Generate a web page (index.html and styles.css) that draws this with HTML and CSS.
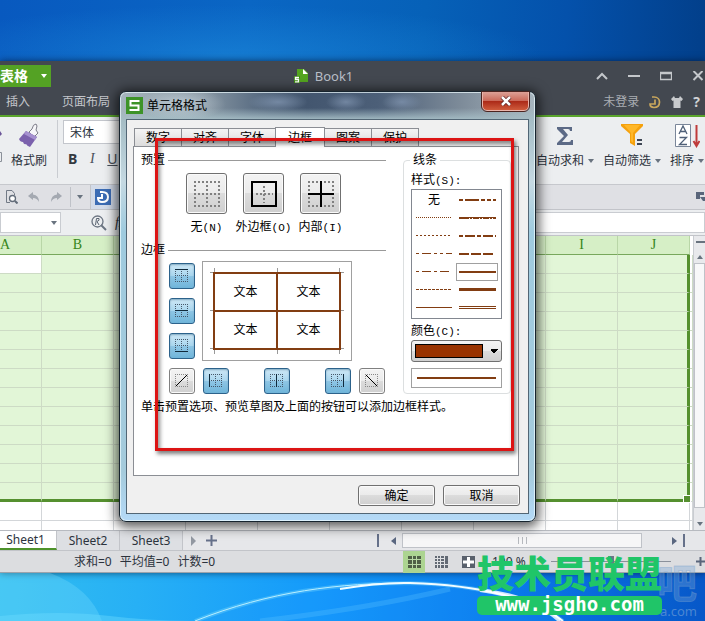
FILE: index.html
```html
<!DOCTYPE html>
<html lang="zh-CN">
<head>
<meta charset="utf-8">
<title>Book1</title>
<link rel="stylesheet" href="styles.css">
</head>
<body>
<svg class="defs" aria-hidden="true">
  <symbol id="dots" viewBox="0 0 14 14"><path d="M0 .5H14M0 6.500H14M0 12.500H14M.5 0V14M6.500 0V14M12.500 0V14" fill="none" stroke="#46586a" stroke-dasharray="1 1"/></symbol>
  <symbol id="bigdots" viewBox="0 0 26 26"><path d="M0 1H26M0 13H26M0 25H26M1 0V26M13 0V26M25 0V26" fill="none" stroke="#808080" stroke-width="2" stroke-dasharray="2 2"/></symbol>
  <symbol id="caret" viewBox="0 0 6 4"><path d="M0 0H6L3 4Z" fill="currentColor"/></symbol>
</svg>
<div class="desktop">
  <main class="app">
    <header class="titlebar">
      <button class="brand">表格<svg class="caret"><use href="#caret"/></svg></button>
      <div class="doc">
        <svg width="15" height="15" viewBox="0 0 15 15"><path d="M3 0H10L14 4V13H3Z" fill="#54a51f"/><path d="M9 0V5H14Z" fill="#fff"/><path d="M0 7H6V14H0Z" fill="#3f8d12"/><path d="M5 8.500H1.500V10.500H4.500V12.800H1" fill="none" stroke="#fff" stroke-width="1.300"/></svg>
        <span>Book1</span>
      </div>
      <div class="winbtns">
        <button aria-label="收起"><svg width="12" height="10" viewBox="0 0 12 10"><path d="M1 8L6 3L11 8" fill="none" stroke="#c4c7cb" stroke-width="2"/></svg></button>
        <button aria-label="最小化"><svg width="12" height="10" viewBox="0 0 12 10"><path d="M0 5H12" stroke="#c4c7cb" stroke-width="2"/></svg></button>
        <button aria-label="最大化"><svg width="12" height="10" viewBox="0 0 12 10"><path d="M.5 1.500H11.500V8.500H.5ZM0 2.500H12" fill="none" stroke="#c4c7cb" stroke-width="1.300"/></svg></button>
        <button aria-label="关闭窗口"><svg width="12" height="10" viewBox="0 0 12 10"><path d="M1.500 0L10.500 9M10.500 0L1.500 9" stroke="#c4c7cb" stroke-width="2"/></svg></button>
      </div>
    </header>
    <nav class="menubar">
      <a href="#">插入</a><a href="#">页面布局</a>
      <div class="account">
        <a href="#">未登录</a>
        <svg width="12" height="13" viewBox="0 0 12 13"><path d="M3 1H5C9 1 10.500 4 10.500 6C10.500 10 8 11.500 5 11.500C2.500 11.500 1 10 1 8H6V3.500" fill="none" stroke="#c9a75c" stroke-width="1.700"/></svg>
        <svg width="12" height="12" viewBox="0 0 12 12"><path d="M3 0L4 2H8L9 0L12 3L10.500 5L9.500 4.500V12H2.500V4.500L1.500 5L0 3Z" fill="#c8cacd"/></svg>
        <a href="#" class="help">?</a>
      </div>
    </nav>
    <section class="ribbon">
      <div class="clip"><svg width="2" height="40" viewBox="0 0 2 40"><path d="M0 4L2 7L0 9Z" fill="#6b5598"/><path d="M0 25.500H1.500V34.500H0" fill="none" stroke="#8a9099"/></svg></div>
      <button class="tool brush">
        <svg width="22" height="25" viewBox="0 0 22 25"><path d="M11 9L14 6Q15 1 18 1Q20 2 18 7L20 10L16 14Z" fill="#f6f6f9" stroke="#7c7c88"/><path d="M8 8L19 14L12 24Q9 23 8 21Q6 22 5 19Q2 19 1 16Z" fill="#7b61ad"/><path d="M8 8L19 14L17 17L6 11Z" fill="#a590cf"/></svg>
        格式刷
      </button>
      <div class="fontgroup">
        <input class="fontname" aria-label="字体名称" value="宋体">
        <div class="styles"><button class="b">B</button><button class="i">I</button><button class="u">U</button></div>
      </div>
      <div class="tools">
        <button class="tool"><svg width="18" height="25" viewBox="0 0 18 25"><path d="M1 4H16V8H14Q14 6 12 6H7L12 12L6 19H13Q15 19 15 17H17V22H1V20L8 13L1 6Z" fill="#5c6a86"/></svg><span>自动求和 <svg class="caret"><use href="#caret"/></svg></span></button>
        <button class="tool"><svg width="22" height="25" viewBox="0 0 22 25"><path d="M0 1H22V3L14 11V23L9 20V11L0 3Z" fill="#f5a10d"/><path d="M3 2H19L12 10V20L10 18V10Z" fill="#ffb728"/><path d="M16 17H21M16 21H21" stroke="#3e4654" stroke-width="2"/></svg><span>自动筛选 <svg class="caret"><use href="#caret"/></svg></span></button>
        <button class="tool"><svg width="26" height="25" viewBox="0 0 26 25"><path d="M1.500 1.500H16.500V23.500H1.500Z" fill="#fff" stroke="#7a8699"/><path d="M5 11L9 3L13 11M6.500 8.500H11.500M5.500 14.500H12.500L5.500 21.500H13" fill="none" stroke="#4f6078" stroke-width="1.300"/><path d="M22.500 2V22M19.500 18L22.500 23L25.500 18" fill="none" stroke="#bf3b3b" stroke-width="2"/></svg><span>排序 <svg class="caret"><use href="#caret"/></svg></span></button>
      </div>
    </section>
    <section class="quick">
      <button aria-label="打印预览"><svg width="13" height="14" viewBox="0 0 13 14"><path d="M9.500 5V3.500L7 .5H1.500V12.500H5" fill="none" stroke="#727a86"/><circle cx="7.500" cy="8.500" r="3" fill="#fff" stroke="#626c79" stroke-width="1.300"/><path d="M10 11L12.500 13.500" stroke="#626c79" stroke-width="2"/></svg></button>
      <button aria-label="撤销"><svg width="12" height="10" viewBox="0 0 12 10"><path d="M0 4L5 0V2.500Q11 3 11 10Q9 6 5 6V8Z" fill="#a4a9b1"/></svg></button>
      <button aria-label="恢复"><svg width="12" height="10" viewBox="0 0 12 10"><path d="M12 4L7 0V2.500Q1 3 1 10Q3 6 7 6V8Z" fill="#a4a9b1"/></svg></button>
      <button class="more" aria-label="更多"><svg class="caret"><use href="#caret"/></svg></button>
      <div class="doctab"><svg width="16" height="16" viewBox="0 0 16 16"><path d="M0 0H16V16H0Z" fill="#3c6cb4"/><path d="M5 3H7Q13 3 13 8Q13 13 7 13Q3 13 3 9H7V5" fill="none" stroke="#fff" stroke-width="2"/></svg>
      <svg width="12" height="12" viewBox="0 0 12 12"><path d="M2.500 1.500H11.500V10.500H2.500ZM4 4H10M4 7H10" fill="none" stroke="#6b7585"/></svg></div>
      <svg class="corner" width="9" height="10" viewBox="0 0 9 10"><path d="M0 0H8V3H4V7H0Z" fill="#59657a"/><path d="M4 5H9V9H7Z" fill="#59657a"/></svg>
    </section>
    <section class="formula">
      <div class="namebox"><svg class="caret"><use href="#caret"/></svg></div>
      <svg width="16" height="16" viewBox="0 0 16 16"><circle cx="6.500" cy="6.500" r="5.500" fill="none" stroke="#6c7582" stroke-width="1.300"/><path d="M10 10L15 15" stroke="#6c7582" stroke-width="2"/><path d="M4.500 10L5.500 3.500H8Q9 5.500 6 6.500L8 10" fill="none" stroke="#596371"/></svg>
      <i class="fx">fx</i>
      <input class="fbar" aria-label="编辑栏">
    </section>
    <section class="sheet">
      <table class="cells">
        <colgroup><col class="first"><col class="c"><col class="c"><col class="c"><col class="c"><col class="c"><col class="c"><col class="c"><col class="c"><col class="c"><col></colgroup>
        <thead><tr><th class="a">A</th><th>B</th><th>C</th><th>D</th><th>E</th><th>F</th><th>G</th><th>H</th><th>I</th><th>J</th><th class="end"></th></tr></thead>
        <tbody id="rows"></tbody>
      </table>
      <div class="vscroll">
        <span class="split"></span>
        <svg class="caret up"><use href="#caret"/></svg>
        <span class="vthumb"></span>
        <svg class="caret"><use href="#caret"/></svg>
      </div>
    </section>
    <section class="sheetbar">
      <button class="on">Sheet1</button><button>Sheet2</button><button>Sheet3</button>
      <svg class="next" width="6" height="10" viewBox="0 0 6 10"><path d="M0 0L5 5L0 10Z" fill="#9298a1"/></svg>
      <svg width="11" height="11" viewBox="0 0 11 11"><path d="M0 5.500H11M5.500 0V11" stroke="#66718a" stroke-width="2"/></svg>
      <div class="hscroll">
        <span class="bar"></span>
        <svg width="5" height="8" viewBox="0 0 5 8"><path d="M5 0V8L0 4Z" fill="#5a6780"/></svg>
        <span class="hthumb"><i></i><i></i><i></i></span>
        <svg class="right" width="5" height="8" viewBox="0 0 5 8"><path d="M0 0V8L5 4Z" fill="#5a6780"/></svg>
        <span class="bar"></span>
      </div>
    </section>
    <footer class="status">
      <span>求和=0</span><span>平均值=0</span><span>计数=0</span>
      <div class="view">
        <button class="on" aria-label="普通视图"><svg width="13" height="12" viewBox="0 0 13 12"><path d="M0 0H13V12H0Z" fill="#4f6045"/><path d="M0 3.500H13M0 8.500H13M4.500 0V12M8.500 0V12" stroke="#b9d9a5"/></svg></button>
        <button aria-label="分页视图"><svg width="13" height="12" viewBox="0 0 13 12"><path d="M0 0H13V12H0Z" fill="#626974"/><path d="M0 2.500H9M0 5.500H9M0 8.500H13M2.500 0V12M5.500 0V12M9.500 0V12" stroke="#dfe0e3"/></svg></button>
        <button aria-label="阅读视图"><svg width="13" height="12" viewBox="0 0 13 12"><path d="M0 0H13V12H0Z" fill="#59606c"/><path d="M1 6H12M6.500 1V11" stroke="#fff" stroke-width="3"/></svg></button>
        <span class="pct">100 %</span>
        <input class="zoom" type="range" aria-label="缩放">
        <svg width="9" height="9" viewBox="0 0 9 9"><path d="M0 4.500H9M4.500 0V9" stroke="#59657a" stroke-width="2"/></svg>
      </div>
    </footer>
  </main>
  <svg class="glow" viewBox="0 0 705 48" preserveAspectRatio="none" aria-hidden="true">
    <path d="M0 0H50Q90 15 102 48H0Z" fill="#8ce6ff" opacity=".25"/>
    <path d="M0 43Q60 37 110 43T230 48H0Z" fill="#6fdcff" opacity=".4"/>
    <path d="M195 48C270 18 340 8 430 12C500 18 545 30 565 48Z" fill="#1c93ff" opacity=".2"/>
    <path d="M195 48C270 18 340 10 410 10C480 12 535 26 563 48" fill="none" stroke="#8fe4ff" stroke-width="4" opacity=".3"/>
    <path d="M195 48C270 18 340 10 410 10" fill="none" stroke="#b8efff" stroke-width="1"/>
    <path d="M340 16C380 9 400 10 410 10C480 12 535 26 563 48" fill="none" stroke="#f0fcff" stroke-width="2"/>
    <path d="M480 17Q535 24 560 48" fill="none" stroke="#fff" stroke-width="4" opacity=".8"/>
    <path d="M260 48C330 40 400 28 450 16" fill="none" stroke="#5cc4ff" stroke-width="5" opacity=".3"/>
  </svg>

  <section class="dialog" role="dialog" aria-labelledby="dlg">
    <header class="dlghead">
      <svg width="17" height="17" viewBox="0 0 17 17"><path d="M0 0H17V17H0Z" fill="#3d9328"/><path d="M13.500 4H4.500V8.500H12.500V13H3.500" fill="none" stroke="#fff" stroke-width="2"/></svg>
      <h1 id="dlg">单元格格式</h1>
      <button class="close" aria-label="关闭"><svg width="12" height="10" viewBox="0 0 12 10"><path d="M2 1L10 9M10 1L2 9" stroke="#5b2020" stroke-width="4"/><path d="M2 1L10 9M10 1L2 9" stroke="#fff" stroke-width="2.500"/></svg></button>
    </header>
    <div class="client">
      <div class="tabs" role="tablist">
        <button role="tab">数字</button><button role="tab">对齐</button><button role="tab">字体</button><button role="tab" class="on">边框</button><button role="tab">图案</button><button role="tab">保护</button>
      </div>
      <div class="panel">
        <div class="main">
          <h2>预置</h2>
          <div class="presets">
            <div class="preset"><button id="p1"><svg width="26" height="26"><use href="#bigdots"/></svg></button><label for="p1">无<span>(N)</span></label></div>
            <div class="preset"><button id="p2"><svg width="26" height="26" viewBox="0 0 26 26"><path d="M5 13H22M13 5V22" stroke="#808080" stroke-width="2" stroke-dasharray="2 2"/><path d="M1 1H25V25H1Z" fill="none" stroke="#000" stroke-width="2"/></svg></button><label for="p2">外边框<span>(O)</span></label></div>
            <div class="preset"><button id="p3"><svg width="26" height="26" viewBox="0 0 26 26"><use href="#bigdots"/><path d="M0 13H26M13 0V26" stroke="#000" stroke-width="2"/></svg></button><label for="p3">内部<span>(I)</span></label></div>
          </div>
          <h2>边框</h2>
          <div class="edges">
            <div class="side">
              <button class="edge on" aria-label="上边框"><svg width="14" height="14" viewBox="0 0 14 14"><use href="#dots"/><path d="M0 .5H13" stroke="#102a3c"/></svg></button>
              <button class="edge on" aria-label="水平内边框"><svg width="14" height="14" viewBox="0 0 14 14"><use href="#dots"/><path d="M0 6.500H13" stroke="#102a3c"/></svg></button>
              <button class="edge on" aria-label="下边框"><svg width="14" height="14" viewBox="0 0 14 14"><use href="#dots"/><path d="M0 12.500H13" stroke="#102a3c"/></svg></button>
            </div>
            <div class="sample">
              <svg class="ticks" viewBox="0 0 134 86" aria-hidden="true"><path d="M0 4.500H134M0 42.500H134M0 80.500H134M4.500 0V86M67.500 0V86M129.500 0V86" stroke="#999"/></svg>
              <div class="quad"><span>文本</span><span>文本</span><span>文本</span><span>文本</span></div>
            </div>
          </div>
          <div class="under">
            <button class="edge" aria-label="斜线向上"><svg width="14" height="14" viewBox="0 0 14 14"><path d="M.5 0V14M12.500 0V14M0 .5H14M0 12.500H14" stroke="#888" stroke-dasharray="1 1"/><path d="M1 12L12 1" stroke="#000"/></svg></button>
            <button class="edge on" aria-label="左边框"><svg width="14" height="14" viewBox="0 0 14 14"><use href="#dots"/><path d="M.5 0V13" stroke="#102a3c"/></svg></button>
            <button class="edge on mid" aria-label="垂直内边框"><svg width="14" height="14" viewBox="0 0 14 14"><use href="#dots"/><path d="M6.500 0V13" stroke="#102a3c"/></svg></button>
            <button class="edge on" aria-label="右边框"><svg width="14" height="14" viewBox="0 0 14 14"><use href="#dots"/><path d="M12.500 0V13" stroke="#102a3c"/></svg></button>
            <button class="edge" aria-label="斜线向下"><svg width="14" height="14" viewBox="0 0 14 14"><path d="M.5 0V14M12.500 0V14M0 .5H14M0 12.500H14" stroke="#888" stroke-dasharray="1 1"/><path d="M1 1L12 12" stroke="#000"/></svg></button>
          </div>
          <p class="hint">单击预置选项、预览草图及上面的按钮可以添加边框样式。</p>
        </div>
        <fieldset class="line">
          <legend>线条</legend>
          <span class="cap" id="stylecap">样式<span>(S):</span></span>
          <div class="linelist" role="listbox" aria-labelledby="stylecap">
            <button role="option">无</button>
            <button role="option" aria-label="线条 1"><svg viewBox="0 0 37 6"><path d="M0 3H37" stroke-width="2" stroke-dasharray="4 2 14 2 4 2 4 2"/></svg></button>
            <button role="option" aria-label="线条 2"><svg viewBox="0 0 37 6"><path d="M0 2.500H36" stroke-dasharray="1 1"/></svg></button>
            <button role="option" aria-label="线条 3"><svg viewBox="0 0 37 6"><path d="M0 3.500H10M11 3.500H13M14 3.500H20M21 3.500H23M24 3.500H30M31 3.500H33M34 3.500H37"/><path d="M0 2.500H37"/></svg></button>
            <button role="option" aria-label="线条 4"><svg viewBox="0 0 37 6"><path d="M0 2.500H36" stroke-dasharray="2 2"/></svg></button>
            <button role="option" aria-label="线条 5"><svg viewBox="0 0 37 6"><path d="M0 3H37" stroke-width="2" stroke-dasharray="4 2 10 2"/></svg></button>
            <button role="option" aria-label="线条 6"><svg viewBox="0 0 37 6"><path d="M0 2.500H36" stroke-dasharray="3 3 9 3 3 3"/></svg></button>
            <button role="option" aria-label="线条 7"><svg viewBox="0 0 37 6"><path d="M0 3H34" stroke-width="2" stroke-dasharray="10 2"/></svg></button>
            <button role="option" aria-label="线条 8"><svg viewBox="0 0 37 6"><path d="M0 2.500H34" stroke-dasharray="3 3 9 3"/></svg></button>
            <button role="option" class="on" aria-selected="true" aria-label="线条 9"><svg viewBox="0 0 37 6"><path d="M0 3H37" stroke-width="2"/></svg></button>
            <button role="option" aria-label="线条 10"><svg viewBox="0 0 37 6"><path d="M0 2.500H36" stroke-dasharray="3 1"/></svg></button>
            <button role="option" aria-label="线条 11"><svg viewBox="0 0 37 6"><path d="M0 2.500H37" stroke-width="3"/></svg></button>
            <button role="option" aria-label="线条 12"><svg viewBox="0 0 37 6"><path d="M0 2.500H36"/></svg></button>
            <button role="option" aria-label="线条 13"><svg viewBox="0 0 37 6"><path d="M0 1.500H37M0 3.500H37"/></svg></button>
          </div>
          <label class="cap" for="color">颜色<span>(C):</span></label>
          <select id="color" class="color"><option></option></select>
          <div class="lineview"><span></span></div>
        </fieldset>
      </div>
      <div class="actions"><button>确定</button><button>取消</button></div>
    </div>
  </section>
  <div class="marker"></div>
  <div class="ghost"><b>吧</b><span>a.com</span></div>
  <div class="stamp"><strong>技术员联盟</strong><span>www.jsgho.com</span></div>
</div>
<script src="grid.js"></script>
</body>
</html>
```
FILE: grid.js
```js
const body = document.getElementById('rows');
for (let r = 0; r < 15; r++) {
  const tr = document.createElement('tr');
  if (r < 13) tr.className = 'sel';
  if (r === 12) tr.className = 'sel last';
  if (r === 14) tr.className = 'cut';
  for (let c = 0; c < 11; c++) tr.appendChild(document.createElement('td'));
  body.appendChild(tr);
}
```
FILE: styles.css
```css
* { box-sizing: border-box; }
body { margin: 0; font: 12px/16px "Noto Sans", "Noto Sans CJK SC", sans-serif; color: #2c333d; }
button, input, select { font: inherit; color: inherit; margin: 0; padding: 0; border: 0; background: none; border-radius: 0; }
svg { display: block; flex: none; }
a { color: inherit; text-decoration: none; }
.defs { position: absolute; width: 0; height: 0; }
.caret { width: 6px; height: 4px; color: #69737f; }

.desktop {
  position: relative; min-height: 100vh; overflow: hidden; display: flex; flex-direction: column; padding-top: 61px;
  background:
    radial-gradient(ellipse 45% 50px at 32% 55px, rgba(30, 140, 220, .55), transparent) top / 100% 61px no-repeat,
    linear-gradient(95deg, #0859bf 0, #0a66c4 35%, #0661b8 60%, #0451ab 80%, #023f8a 100%) top / 100% 61px no-repeat,
    linear-gradient(95deg, #35c3ee 0, #27b0f5 25%, #1399fb 50%, #0978ea 75%, #0757c8 100%);
}
.glow { width: 100%; flex: 1; min-height: 48px; height: 48px; }

/* Application window */
.app { background: #e9eaed; box-shadow: 0 0 7px rgba(0, 10, 30, .6); display: flex; flex-direction: column; }
.titlebar { height: 30px; background: #434850; display: flex; align-items: center; }
.brand { width: 51px; height: 22px; background: #54a224; color: #fff; font-size: 14px; font-weight: 700; display: flex; align-items: center; justify-content: space-between; padding-right: 4px; }
.brand .caret { color: #fff; }
.doc { flex: 1; display: flex; align-items: center; justify-content: center; gap: 6px; color: #b9bfc8; font-size: 13px; }
.winbtns { display: flex; gap: 20px; padding-right: 1px; }
.winbtns button { display: flex; }
.menubar { height: 26px; background: #434850; border-bottom: 2px solid #5aa52c; display: flex; align-items: center; padding: 0 5px 2px 6px; color: #c3c6cb; gap: 32px; }
.account { margin-left: auto; display: flex; align-items: center; gap: 10px; color: #a9adb3; }
.help { font-size: 14px; font-weight: 700; color: #d0d2d5; }
.ribbon { height: 68px; background: #eceef0; border-bottom: 1px solid #c6c8cd; display: flex; padding: 6px 1px 0 0; }
.clip { width: 11px; padding-top: 4px; }
.tool { display: flex; flex-direction: column; align-items: center; gap: 5px; padding: 0; height: 46px; white-space: nowrap; }
.tool span { display: flex; align-items: center; gap: 4px; }
.tools { margin-left: auto; display: flex; gap: 9px; }
.fontgroup { border-left: 1px solid #c9ccd1; margin-left: 10px; padding-left: 5px; height: 58px; margin-top: -3px; }
.fontname { width: 90px; height: 24px; background: #fff; border: 1px solid #c3c6cc; padding-left: 6px; }
.styles { display: flex; gap: 10px; padding: 7px 0 0 5px; font-size: 14px; color: #4a505a; }
.styles .b { font-weight: 700; color: #33383f; }
.styles .i { font-family: "Liberation Serif", serif; font-style: italic; width: 10px; }
.styles .u { text-decoration: underline; }
.quick { height: 25px; background: #dfe0e4; border-bottom: 1px solid #c2c4c9; display: flex; align-items: center; padding-left: 5px; gap: 10px; }
.quick button { display: flex; }
.quick .more { border-left: 1px solid #bfc2c8; padding: 8px 0 8px 6px; margin-left: -2px; }
.doctab { background: #d3dbe9; border-left: 1px solid #c2c4c9; height: 24px; display: flex; align-items: center; gap: 6px; padding: 0 4px; margin-left: -3px; }
.corner { margin-left: auto; }
.formula { height: 26px; background: #eceef0; display: flex; align-items: center; border-bottom: 1px solid #c2c4c9; }
.namebox { width: 61px; height: 21px; background: #fff; border: 1px solid #c9ccd1; display: flex; align-items: center; justify-content: flex-end; padding-right: 3px; margin-right: 30px; }
.fx { font: italic 14px/16px "Liberation Serif", serif; margin: 0 12px 0 8px; }
.fbar { flex: 1; height: 21px; background: #fff; border: 1px solid #c9ccd1; }

.sheet { display: flex; height: 294px; overflow: hidden; background: #fff; }
.cells { flex: 1; width: 0; table-layout: fixed; border-collapse: separate; border-spacing: 0; }
.first { width: 42px; }
.c { width: 72px; }
.cells th { height: 19px; padding: 0; background: #d6efc6; border-right: 1px solid #b9d6a7; border-bottom: 1px solid #78a85c; font: 14px/18px "Liberation Serif", serif; color: #35851a; }
.cells .a { text-align: left; }
.cells .end { background: #fff; border-color: #fff; }
.cells td { height: 19px; padding: 0; border-right: 1px solid #d3d6d9; border-bottom: 1px solid #d3d6d9; }
.sel td { background: #e2f6d7; border-color: #cddbc5; }
.cells .sel:first-child td:first-child, .cells .sel td:last-child { background: #fff; }
.cells .sel td:nth-child(10) { border-right: 3px solid #55902f; }
.cells .last td { border-bottom: 3px solid #55902f; }
.cells .last td:last-child { border-bottom: 1px solid #d3d6d9; }
.cells .last td:nth-child(10) { position: relative; }
.cells .last td:nth-child(10)::after { content: ""; position: absolute; right: -4px; bottom: -4px; width: 6px; height: 6px; background: #55902f; border: 1px solid #fff; }
.cells .cut td { border-bottom: 0; }
.vscroll { width: 12px; background: #e8e9ec; border-left: 1px solid #c9ccd1; display: flex; flex-direction: column; align-items: center; padding: 5px 0 4px; gap: 4px; }
.split { width: 100%; height: 2px; background: #69737f; margin: 0 0 8px 3px; }
.up { transform: rotate(180deg); }
.vthumb { flex: 1; width: 100%; background: #f8f8f9; border: 1px solid #bfc2c8; margin-bottom: 10px; }

.sheetbar { height: 21px; background: #e6e7ea; border-top: 1px solid #b7bac0; border-bottom: 1px solid #c2c4c9; display: flex; align-items: center; font-size: 12px; }
.sheetbar button { width: 63px; height: 19px; background: #dddfe3; border-right: 1px solid #c2c4c9; }
.sheetbar .on { width: 57px; background: #fff; border-bottom: 2px solid #4d922a; padding-right: 5px; }
.next { margin: 0 9px 0 8px; }
.hscroll { margin-left: auto; display: flex; align-items: center; width: 328px; gap: 6px; }
.bar { width: 2px; height: 13px; background: #66718a; }
.bar:first-child { margin-right: 6px; }
.bar:last-child { margin-right: 20px; }
.hthumb { flex: 1; height: 15px; background: #f6f6f7; border: 1px solid #bfc2c8; display: flex; gap: 3px; justify-content: center; align-items: center; }
.hthumb i { width: 1px; height: 7px; background: #b6b9be; }
.right { margin-left: 24px; }
.status { height: 22px; background: #dcdde0; border-bottom: 1px solid #9da3ab; display: flex; align-items: center; gap: 8px; padding-left: 74px; }
.view { margin-left: auto; width: 302px; display: flex; align-items: center; gap: 5px; }
.view button { width: 22px; height: 22px; display: flex; align-items: center; justify-content: center; }
.view .on { background: #acd491; }
.pct { margin-left: 8px; white-space: nowrap; }
.zoom { flex: 1; min-width: 0; margin: 0 20px; height: 12px; appearance: none; background: linear-gradient(#8b919b, #8b919b) center / 100% 1px no-repeat; }
.zoom::-webkit-slider-thumb { appearance: none; width: 6px; height: 12px; background: #6d7686; }

/* Format dialog */
.dialog {
  position: absolute; left: 119px; top: 91px; width: 417px; padding: 0 6px 7px; border: 1px solid #17242e; border-radius: 7px;
  background:
    radial-gradient(ellipse 44px 16px at 62px 12px, rgba(215, 228, 236, .6), transparent),
    radial-gradient(ellipse 30px 9px at 158px 10px, rgba(125, 145, 172, .8), transparent),
    radial-gradient(ellipse 20px 9px at 226px 10px, rgba(125, 145, 172, .8), transparent),
    radial-gradient(ellipse 20px 9px at 282px 10px, rgba(125, 145, 172, .8), transparent),
    linear-gradient(transparent 16px, #a5bdc5 28px, transparent 29px) top / 100% 29px no-repeat,
    linear-gradient(90deg, #a6b5bd 0, #8796a2 20%, #5e7186 32%, #43566f 45%, #4c5f78 62%, #7d8b99 82%, #a6b4bd 100%) top / 100% 28px no-repeat,
    linear-gradient(#a5bdc5 28px, #c5d9e2 90px, #9fcbdf 140px, #a5cbdc 380px, #b5daf8 430px);
  box-shadow: inset 0 0 0 1px rgba(240, 252, 255, .7), 0 2px 12px 3px rgba(0, 0, 0, .65);
  font-family: "Liberation Sans", "Noto Sans CJK SC", sans-serif; color: #000;
}
.dlghead { height: 27px; display: flex; align-items: center; gap: 4px; }
.dlghead h1 { margin: 0; font-size: 12px; font-weight: 400; }
.close { margin-left: auto; align-self: flex-start; width: 47px; height: 19px; border: 1px solid #eab5ab; border-top: 0; border-radius: 0 0 5px 5px; outline: 1px solid #4c2420; background: linear-gradient(#dda197 0, #cb6a5a 48%, #ac2a18 52%, #cf5b3c 100%); display: flex; align-items: center; justify-content: center; }
.client { background: #f0f0f0; border: 1px solid #526675; padding: 7px 9px 7px 6px; }
.tabs { display: flex; align-items: flex-end; padding-left: 1px; }
.tabs button { width: 48px; height: 18px; border: 1px solid #8b8e94; border-bottom: 0; background: linear-gradient(#f4f4f4, #dcdcdc); line-height: 16px; margin-right: -1px; }
.tabs .on { width: 50px; height: 20px; background: #fff; position: relative; margin-bottom: -1px; }
.panel { min-height: 330px; background: #fff; border: 1px solid #8b8e94; display: flex; padding: 5px 7px 0 7px; align-items: flex-start; }
.main { width: 245px; flex: none; }
.main h2 { margin: 0; font-size: 12px; line-height: 16px; font-weight: 400; display: flex; align-items: center; gap: 3px; }
.main h2::after { content: ""; flex: 1; height: 1px; background: #999; }
.presets { display: grid; grid-template-columns: repeat(3, 57px); padding: 5px 0 6px 37px; }
.preset { display: flex; flex-direction: column; align-items: center; gap: 5px; white-space: nowrap; }
.preset button { width: 41px; height: 41px; border: 1px solid #707070; border-radius: 3px; background: linear-gradient(#f3f3f3 0, #ebebeb 49%, #dcdcdc 50%, #cfcfcf 100%); box-shadow: inset 0 0 0 1px #fafafa; display: flex; align-items: center; justify-content: center; }
.preset span, .cap span { font: 11px/16px "Liberation Mono", monospace; }
.edges { display: flex; gap: 7px; padding: 3px 0 7px 28px; }
.side { display: flex; flex-direction: column; gap: 9px; padding-top: 2px; }
.edge { width: 26px; height: 26px; border: 1px solid #808080; border-radius: 3px; background: linear-gradient(#f3f3f3 0, #ebebeb 49%, #dcdcdc 50%, #d0d0d0 100%); box-shadow: inset 0 0 0 1px #fafafa; display: flex; align-items: center; justify-content: center; }
.edge.on { border-color: #2c628b; background: linear-gradient(#cfe8f6 0, #a9d6ee 49%, #8fc6e5 50%, #6fb5da 100%); box-shadow: inset 0 1px 2px #7fa9c0; }
.sample { width: 150px; height: 100px; border: 1px solid #a0a0a0; display: grid; place-items: center; }
.ticks, .quad { grid-area: 1 / 1; }
.ticks { width: 134px; height: 86px; }
.quad { width: 128px; height: 78px; display: grid; grid-template-columns: 1fr 1fr; grid-template-rows: 1fr 1fr; gap: 2px; padding: 2px; background: #823d12; }
.quad span { background: #fff; display: grid; place-items: center; }
.under { display: flex; gap: 8px; padding-left: 28px; }
.under .mid { margin: 0 27px; }
.hint { margin: 5px 0 0; white-space: nowrap; }
.line { flex: 1; min-width: 0; margin: 0 0 0 17px; border: 1px solid #dcdfe0; border-radius: 4px; padding: 4px 8px 5px 7px; display: flex; flex-direction: column; }
.line legend { padding: 0 3px; margin-left: -1px; }
.cap { display: block; height: 17px; }
.linelist { height: 130px; border: 1px solid #828790; display: grid; grid-template-columns: 44px 1fr; grid-template-rows: repeat(7, 18px); padding: 1px 3px 1px 0; margin-bottom: 4px; }
.linelist button { display: flex; align-items: center; justify-content: center; }
.linelist svg { width: 37px; height: 6px; }
.linelist path { stroke: #823d12; fill: none; }
.linelist .on { border: 1px solid #a0a0a0; }
.color { appearance: none; height: 22px; width: 100%; border: 1px solid #707070; border-radius: 3px; background:
  linear-gradient(#993300, #993300) 4px 4px / 66px 12px no-repeat,
  linear-gradient(#000, #000) 3px 3px / 68px 14px no-repeat,
  conic-gradient(from 315deg at 50% 100%, #000 90deg, transparent 0) 78px 8px / 8px 4px no-repeat,
  linear-gradient(#f3f3f3 0, #ebebeb 49%, #dcdcdc 50%, #d0d0d0 100%); }
.lineview { margin-top: 6px; height: 20px; border: 1px solid #a0a0a0; display: flex; align-items: center; padding: 0 5px; }
.lineview span { flex: 1; height: 2px; background: #823d12; }
.actions { display: flex; justify-content: flex-end; gap: 8px; padding-top: 9px; margin-right: -1px; }
.actions button { width: 77px; height: 21px; border: 1px solid #707070; border-radius: 3px; background: linear-gradient(#f3f3f3 0, #ebebeb 49%, #dcdcdc 50%, #cfcfcf 100%); box-shadow: inset 0 0 0 1px #fafafa; }

/* Overlays */
.marker { position: absolute; left: 155px; top: 138px; width: 359px; height: 313px; border: 3px solid #dc1414; box-shadow: 2px 3px 4px rgba(0, 0, 0, .5), inset 2px 3px 4px rgba(0, 0, 0, .45); pointer-events: none; }
.stamp { position: absolute; left: 477px; top: 550px; display: flex; flex-direction: column; align-items: center; gap: 2px; }
.stamp strong { font: 900 37px/44px "Noto Sans CJK SC", sans-serif; color: #20c568; }
.stamp span { width: 100%; height: 19px; border-radius: 5px; background: #20c568; color: #fff; font: 700 19px/17px "DejaVu Sans Mono", monospace; text-align: center; }
.ghost { position: absolute; left: 657px; top: 558px; display: flex; flex-direction: column; align-items: flex-end; color: rgba(120, 165, 215, .35); }
.ghost b { font: 700 40px/46px "Noto Sans CJK SC", sans-serif; -webkit-text-stroke: 1px rgba(120, 160, 205, .4); }
.ghost span { font-size: 13px; line-height: 14px; color: rgba(120, 165, 215, .6); }
```
